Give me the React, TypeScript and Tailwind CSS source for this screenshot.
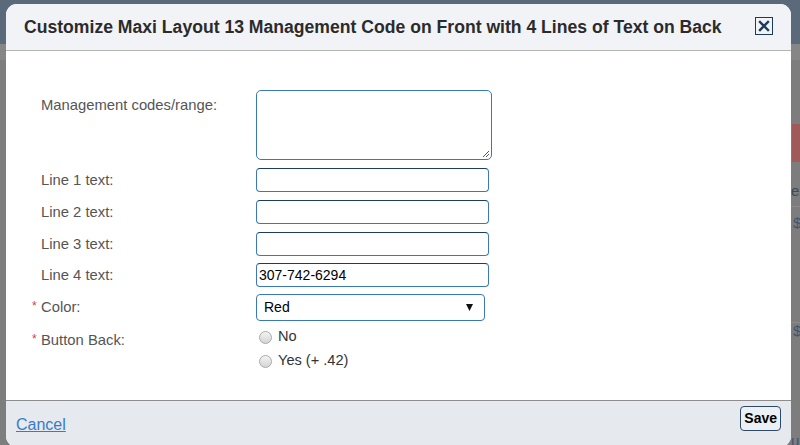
import React from "react";

const font = { fontFamily: '"Liberation Sans", Arial, sans-serif' };

function Row({ label, required, children, top = false }: { label: string; required?: boolean; children: React.ReactNode; top?: boolean }) {
  return (
    <div className={`flex ${top ? "items-start" : "items-center"}`}>
      <div className={`w-[250px] pl-[26px] flex items-center text-[14.8px] text-[#555] ${top ? "pt-[4px]" : ""}`}>
        <span className="w-[9px] text-[#e0393e] text-[12px] leading-[12px] -mt-[3px]">{required ? "*" : ""}</span>
        <span>{label}</span>
      </div>
      {children}
    </div>
  );
}

function Radio({ label }: { label: string }) {
  return (
    <div className="flex items-center h-[24px] pl-[3px]">
      <span className="w-[13px] h-[13px] rounded-full border border-[#a9a9a9] bg-gradient-to-b from-[#f4f4f4] to-[#d4d4d4]" />
      <span className="ml-[6px] text-[14.6px] text-[#333]">{label}</span>
    </div>
  );
}

export default function App() {
  const inputCls =
    "w-[233px] h-[24px] rounded-[4px] border border-[#3b78b8] border-t-[#1d3c60] bg-white px-[2px] text-[14px] text-black flex items-center";
  return (
    <div className="relative w-[800px] h-[445px] overflow-hidden bg-[#7d7d7d]" style={font}>
      {/* page behind overlay */}
      <div className="absolute left-0 top-0 w-[800px] h-[44px] bg-[#5b6a7b]" />
      <div className="absolute left-0 top-[44px] w-[800px] h-[16px] bg-[#868686]" />
      <div className="absolute left-[792px] top-[124px] w-[10px] h-[38px] bg-[#a05a5a]" />
      <div className="absolute left-[791px] top-[180px] text-[15px] text-[#3e4a58]">en</div>
      <div className="absolute left-[791px] top-[206px] w-[10px] h-px bg-[#8c8c8c]" />
      <div className="absolute left-[793px] top-[212px] text-[15px] text-[#405570]">$</div>
      <div className="absolute left-[791px] top-[322px] w-[10px] h-px bg-[#8c8c8c]" />
      <div className="absolute left-[793px] top-[320px] text-[15px] text-[#405570]">$</div>
      <div className="absolute left-[791px] top-[430px] text-[15px] text-[#405570]">u</div>

      {/* modal */}
      <div className="absolute left-[6px] top-[4px] w-[785px] h-[443px] rounded-[11px] overflow-hidden bg-white flex flex-col">
        <div className="h-[47px] shrink-0 bg-[#f2f3f7] border-b border-[#b4b4b4] flex items-center justify-between pl-[18px] pr-[18px]">
          <div className="text-[17.6px] font-bold text-[#2b2b2b] pt-[1px] whitespace-nowrap">
            Customize Maxi Layout 13 Management Code on Front with 4 Lines of Text on Back
          </div>
          <div className="w-[18px] h-[18px] border-[1.5px] border-[#1e3a5a] flex items-center justify-center -mt-[2px] shrink-0">
            <svg width="12" height="12" viewBox="0 0 12 12">
              <path d="M2 2 L10 10 M10 2 L2 10" stroke="#1e3a5a" strokeWidth="2.4" strokeLinecap="square" />
            </svg>
          </div>
        </div>

        <div className="flex-1 pt-[39px] flex flex-col">
          <Row label="Management codes/range:" top>
            <div className="w-[236px] h-[70px] rounded-[5px] border border-[#3b78b8] bg-white relative">
              <svg className="absolute right-[1px] bottom-[1px]" width="9" height="9" viewBox="0 0 9 9">
                <path d="M8 2 L2 8 M8 5 L5 8" stroke="#555" strokeWidth="1" />
              </svg>
            </div>
          </Row>
          <div className="h-[8px]" />
          <Row label="Line 1 text:"><div className={inputCls} /></Row>
          <div className="h-[8px]" />
          <Row label="Line 2 text:"><div className={inputCls} /></Row>
          <div className="h-[8px]" />
          <Row label="Line 3 text:"><div className={inputCls} /></Row>
          <div className="h-[7px]" />
          <Row label="Line 4 text:"><div className={inputCls}>307-742-6294</div></Row>
          <div className="h-[7px]" />
          <Row label="Color:" required>
            <div className="w-[229px] h-[27px] rounded-[4px] border border-[#3b78b8] bg-white flex items-center justify-between pl-[7px] pr-[11px] text-[14px] text-black">
              <span>Red</span>
              <svg width="7" height="7" viewBox="0 0 7 7"><path d="M0 0 L7 0 L3.5 7 Z" fill="#111" /></svg>
            </div>
          </Row>
          <div className="h-[4px]" />
          <Row label="Button Back:" required top>
            <div className="flex flex-col">
              <Radio label="No" />
              <Radio label="Yes (+ .42)" />
            </div>
          </Row>
        </div>

        <div className="h-[47px] shrink-0 bg-[#e6e9ee] border-t border-[#8c8c8c] flex items-start justify-between pl-[10px] pr-[10px]">
          <a className="text-[16px] text-[#3a7bc8] underline mt-[12px]">Cancel</a>
          <button className="mt-[5px] h-[25px] px-[3px] rounded-[4px] border border-[#2c4a6a] bg-[#eceff3] text-[14px] font-bold text-black">
            Save
          </button>
        </div>
      </div>
    </div>
  );
}
